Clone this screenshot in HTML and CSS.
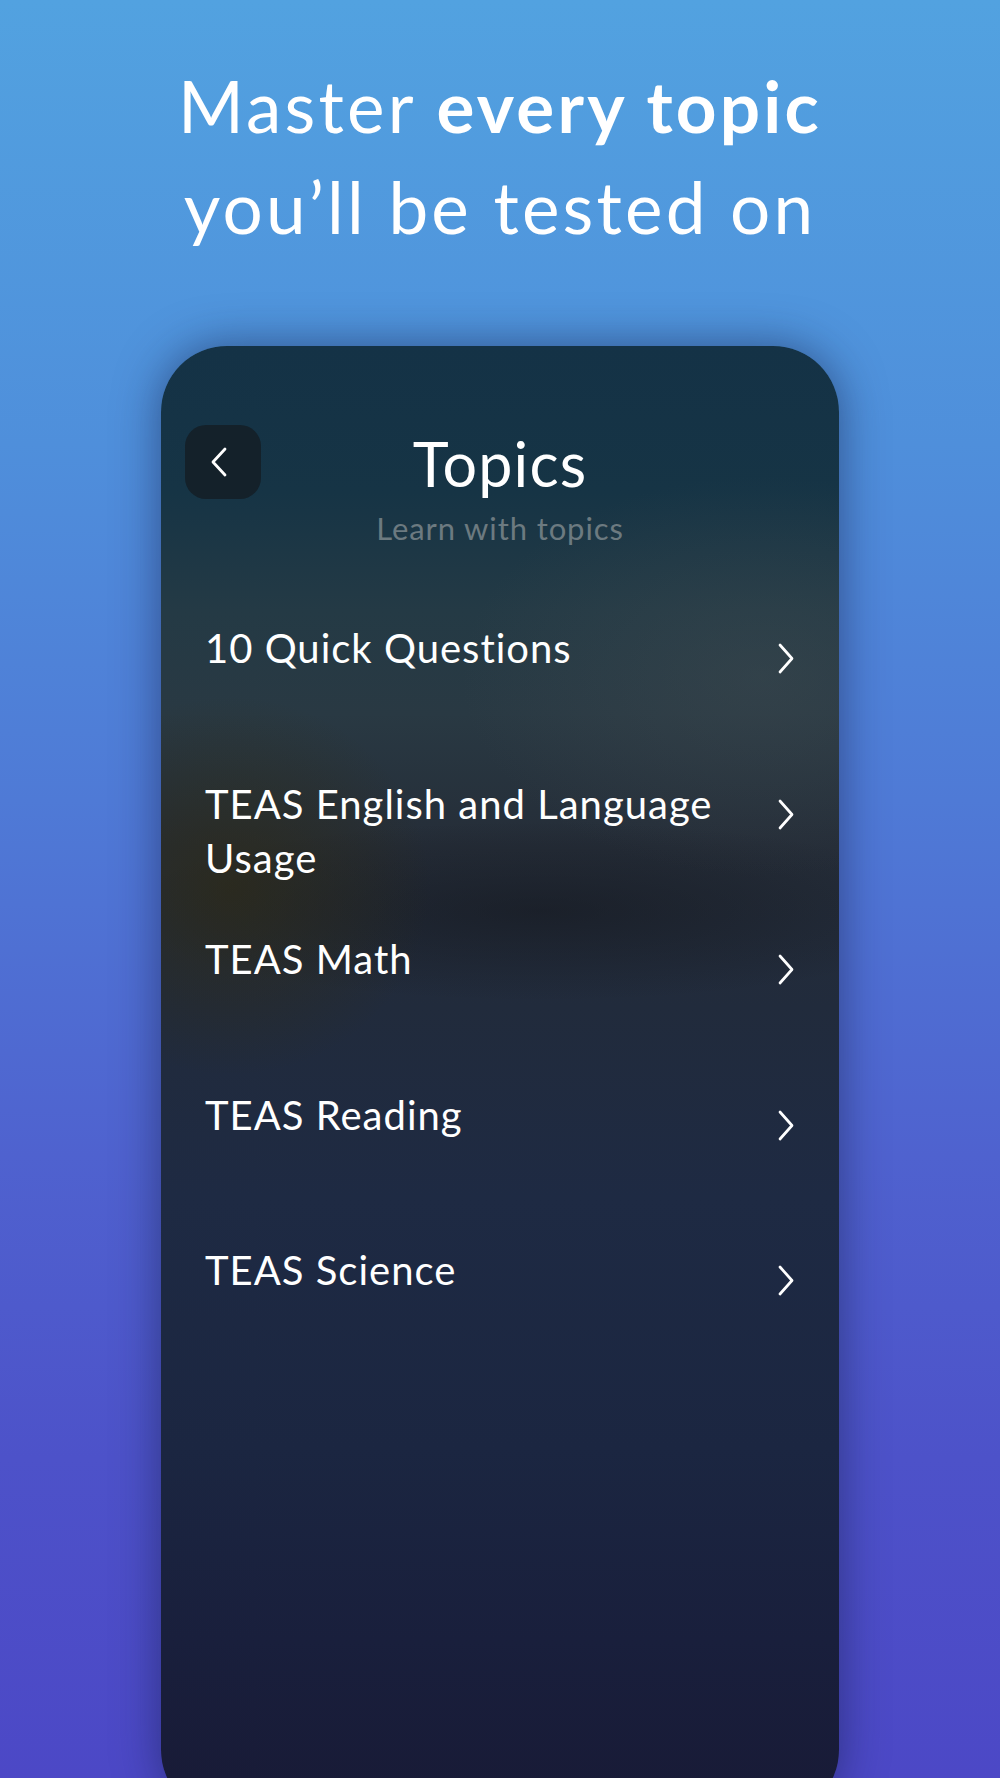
FILE: index.html
```html
<!DOCTYPE html>
<html lang="en">
<head>
<meta charset="utf-8">
<title>Master every topic</title>
<link rel="stylesheet" href="styles.css">
</head>
<body>
<div class="page">
  <h1 class="headline">Master <b>every topic</b><br>you’ll be tested on</h1>
  <div class="phone">
    <div class="nav">
      <div class="back">
        <svg width="16" height="30" viewBox="0 0 16 30"><polyline points="14,2 2,15 14,28" fill="none" stroke="#fff" stroke-width="2.8" stroke-linecap="round" stroke-linejoin="round"/></svg>
      </div>
      <div class="titles">
        <div class="title">Topics</div>
        <div class="subtitle">Learn with topics</div>
      </div>
      <div class="spacer"></div>
    </div>
    <ul class="list">
      <li class="row"><span class="label">10 Quick Questions</span><svg class="chev" width="18" height="31" viewBox="0 0 18 31"><polyline points="3,2 15,15.5 3,29" fill="none" stroke="#fff" stroke-width="2.7" stroke-linecap="round" stroke-linejoin="round"/></svg></li>
      <li class="row"><span class="label">TEAS English and Language Usage</span><svg class="chev" width="18" height="31" viewBox="0 0 18 31"><polyline points="3,2 15,15.5 3,29" fill="none" stroke="#fff" stroke-width="2.7" stroke-linecap="round" stroke-linejoin="round"/></svg></li>
      <li class="row"><span class="label">TEAS Math</span><svg class="chev" width="18" height="31" viewBox="0 0 18 31"><polyline points="3,2 15,15.5 3,29" fill="none" stroke="#fff" stroke-width="2.7" stroke-linecap="round" stroke-linejoin="round"/></svg></li>
      <li class="row"><span class="label">TEAS Reading</span><svg class="chev" width="18" height="31" viewBox="0 0 18 31"><polyline points="3,2 15,15.5 3,29" fill="none" stroke="#fff" stroke-width="2.7" stroke-linecap="round" stroke-linejoin="round"/></svg></li>
      <li class="row"><span class="label">TEAS Science</span><svg class="chev" width="18" height="31" viewBox="0 0 18 31"><polyline points="3,2 15,15.5 3,29" fill="none" stroke="#fff" stroke-width="2.7" stroke-linecap="round" stroke-linejoin="round"/></svg></li>
    </ul>
  </div>
</div>
</body>
</html>
```
FILE: styles.css
```css
* { box-sizing: border-box; }
html, body {
  margin: 0;
  padding: 0;
}
body {
  width: 1000px;
  height: 1778px;
  overflow: hidden;
  font-family: "Lato", "Noto Sans", sans-serif;
  background: linear-gradient(180deg, #52a2e0 0%, #4f8fdb 25%, #4f7ad6 45%, #4f62cf 65%, #4d52c9 82%, #4c48c6 100%);
  color: #fff;
}
.page {
  display: flex;
  flex-direction: column;
  align-items: center;
  padding-top: 55px;
}
.headline {
  margin: 0;
  font-size: 71px;
  line-height: 101px;
  font-weight: 400;
  text-align: center;
  letter-spacing: 3.2px;
}
.headline b { font-weight: 700; }
.phone {
  margin-top: 89px;
  width: 678px;
  height: 1470px;
  flex-shrink: 0;
  border-radius: 66px;
  padding: 79px 24px 0 24px;
  box-shadow: 0 0 45px rgba(20, 30, 70, 0.55);
  background:
    radial-gradient(ellipse 200px 190px at 70px 540px, rgba(48, 42, 16, 0.6), rgba(48, 42, 16, 0) 100%),
    radial-gradient(ellipse 300px 200px at 600px 330px, rgba(70, 80, 85, 0.35), rgba(70, 80, 85, 0) 100%),
    radial-gradient(ellipse 420px 90px at 380px 565px, rgba(18, 20, 26, 0.5), rgba(18, 20, 26, 0) 100%),
    linear-gradient(180deg, #143246 0%, #163445 10%, #243a45 18%, #293943 25%, #252d38 34%, #212b3c 45%, #1e2a43 58%, #1b2641 75%, #191f3c 88%, #181a36 100%);
}
.nav {
  display: grid;
  grid-template-columns: 76px 1fr 76px;
  align-items: start;
}
.back {
  width: 76px;
  height: 74px;
  border-radius: 21px;
  background: #14212a;
  display: flex;
  align-items: center;
  justify-content: center;
  padding-right: 8px;
}
.back svg { display: block; }
.titles {
  text-align: center;
  padding-top: 2px;
}
.title {
  font-size: 61px;
  line-height: 73px;
  font-weight: 400;
  letter-spacing: 1.2px;
}
.subtitle {
  margin-top: 9px;
  font-size: 31px;
  line-height: 38px;
  color: #6c7a80;
  letter-spacing: 0.9px;
}
.list {
  list-style: none;
  margin: 74px 0 0 0;
  padding: 0 22px 0 20px;
}
.row {
  height: 155.5px;
  display: flex;
  justify-content: space-between;
  align-items: flex-start;
}
.label {
  font-size: 40px;
  line-height: 54px;
  max-width: 520px;
  letter-spacing: 1px;
}
.chev {
  display: block;
  flex-shrink: 0;
  margin-top: 22px;
  margin-right: -2px;
}
```
